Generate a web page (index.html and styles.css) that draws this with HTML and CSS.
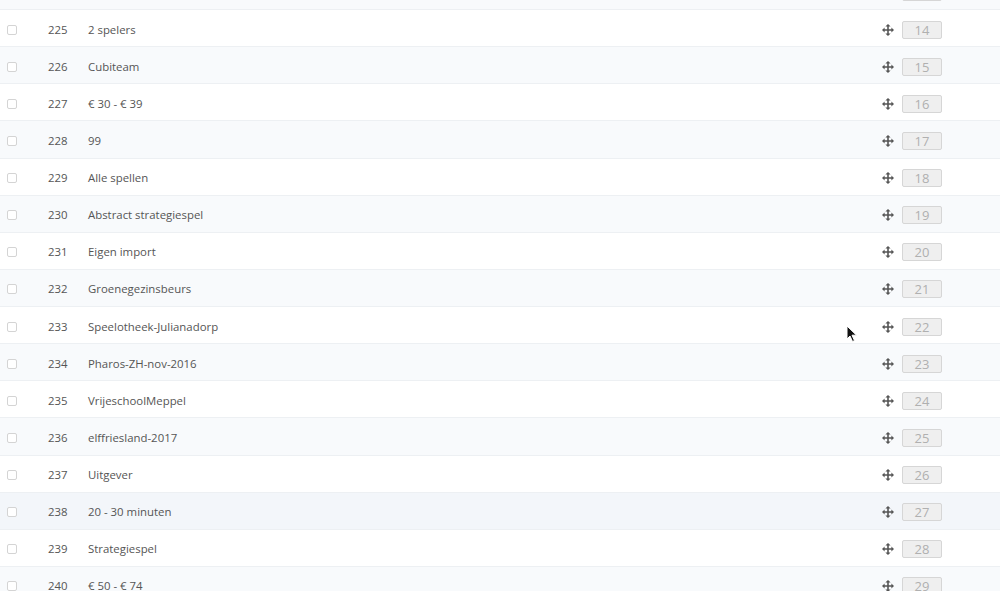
FILE: index.html
```html
<!DOCTYPE html>
<html lang="en">
<head>
    <meta charset="UTF-8">
    <meta name="viewport" content="width=device-width, initial-scale=1.0">
    <title>Categorieën sorteren</title>
    <link rel="stylesheet" href="styles.css">
</head>
<body>
    <div class="table-wrap">
        <div class="sort-list" id="sortList"></div>
        <!-- mouse pointer from the screenshot -->
        <svg class="cursor" width="12" height="18" viewBox="0 0 12 18">
            <path d="M1 1 L1 14 L4 11 L6.5 16.5 L8.5 15.6 L6 10.2 L10.5 10.2 Z" fill="#111" stroke="#fff" stroke-width="1"/>
        </svg>
    </div>

    <script>
        // first row is scrolled mostly out of view, only its box edge shows
        const items = [
            [null, ""],
            [225, "2 spelers"],
            [226, "Cubiteam"],
            [227, "€ 30 - € 39"],
            [228, "99"],
            [229, "Alle spellen"],
            [230, "Abstract strategiespel"],
            [231, "Eigen import"],
            [232, "Groenegezinsbeurs"],
            [233, "Speelotheek-Julianadorp"],
            [234, "Pharos-ZH-nov-2016"],
            [235, "VrijeschoolMeppel"],
            [236, "elffriesland-2017"],
            [237, "Uitgever"],
            [238, "20 - 30 minuten"],
            [239, "Strategiespel"],
            [240, "€ 50 - € 74"]
        ];

        const moveIcon = '<svg class="move-icon" width="12" height="12" viewBox="0 0 12 12">' +
            '<path d="M6 0 L8.6 2.6 H6.8 V5.2 H9.4 V3.4 L12 6 L9.4 8.6 V6.8 H6.8 V9.4 H8.6 L6 12 L3.4 9.4 H5.2 V6.8 H2.6 V8.6 L0 6 L2.6 3.4 V5.2 H5.2 V2.6 H3.4 Z"/></svg>';

        const list = document.getElementById("sortList");
        items.forEach((item, i) => {
            const row = document.createElement("div");
            row.className = "sort-row" + (i % 2 === 0 ? " striped" : "");
            if (item[0] === 238) row.className += " hovered";
            const first = item[0] === null;
            row.innerHTML =
                '<span class="check">' + (first ? '' : '<input type="checkbox">') + '</span>' +
                '<span class="id">' + (first ? '' : item[0]) + '</span>' +
                '<span class="name">' + item[1] + '</span>' +
                '<span class="handle">' + (first ? '<span class="move-space"></span>' : moveIcon) +
                '<span class="position">' + (first ? '' : i + 13) + '</span></span>';
            list.appendChild(row);
        });
    </script>
</body>
</html>
```

FILE: styles.css
```css
body {
    margin: 0;
    padding: 0;
    background: #fff;
    font-family: "Open Sans", Arial, sans-serif;
    font-size: 11.4px;
    color: #555;
    overflow: hidden;
}

.table-wrap {
    position: relative;
    height: 591px;
    overflow: hidden;
}

.sort-list {
    margin-top: -27.13px;
}

.sort-row {
    display: grid;
    grid-template-columns: 48px 40px 1fr 118px;
    align-items: center;
    height: 33.13px;
    padding-top: 3px;
    border-bottom: 1px solid #edf0f3;
    background: #fff;
}

.sort-row.striped {
    background: #f8fafc;
}

.sort-row.hovered {
    background: #f3f6fa;
}

.check {
    padding-left: 7px;
    display: flex;
    align-items: center;
}

.check input {
    appearance: none;
    -webkit-appearance: none;
    width: 10px;
    height: 10px;
    margin: 0;
    border: 1px solid #d4d4d4;
    border-radius: 2px;
    background: #fff;
}

.id,
.name {
    line-height: 16px;
}

.handle {
    display: flex;
    align-items: center;
}

.move-icon,
.move-space {
    fill: #555;
    width: 12px;
    height: 12px;
    margin-right: 8px;
}

.position {
    width: 38px;
    height: 16px;
    line-height: 16px;
    border: 1px solid #d6d6d6;
    border-radius: 2px;
    background: #efefef;
    color: #b0b0b0;
    font-size: 13px;
    text-align: center;
}

.cursor {
    position: absolute;
    left: 846px;
    top: 325px;
}
```
